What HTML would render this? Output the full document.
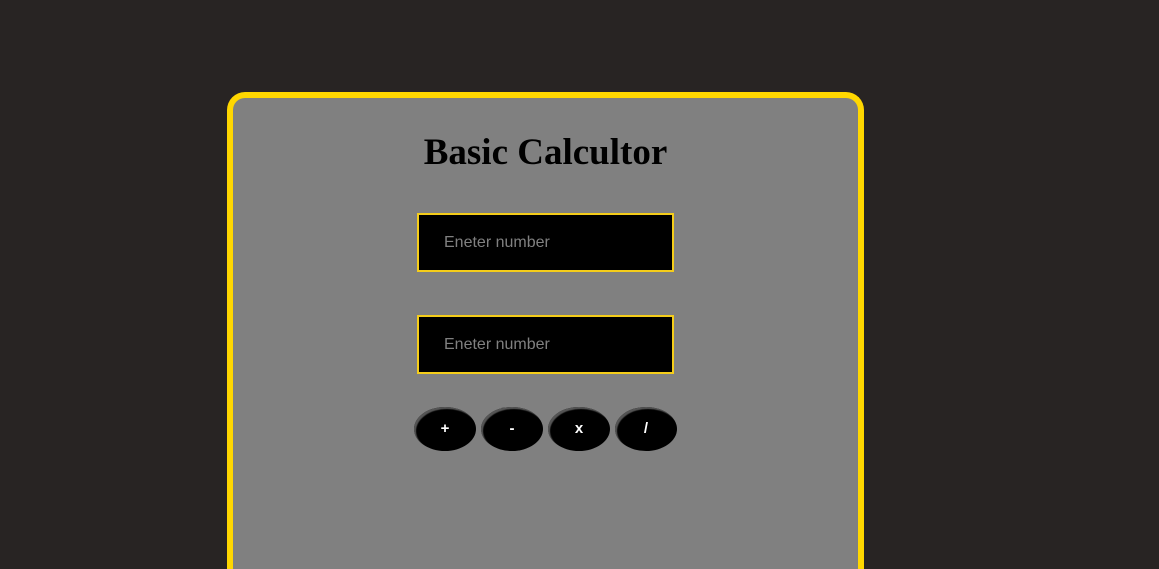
<!DOCTYPE html>
<html><head><style>
html,body{margin:0;padding:0;background:#282423;width:1159px;height:569px;overflow:hidden}
.wrap{position:relative;width:1159px;height:569px;overflow:hidden}
.card{position:absolute;left:227px;top:92px;width:625px;height:471px;border:6px solid #ffd700;border-bottom:0;border-radius:18px 18px 0 0;background:#808080}
h1{position:absolute;left:227px;width:637px;top:131px;margin:0;text-align:center;font:bold 37px "Liberation Serif",serif;color:#000}
.in{position:absolute;left:417px;width:253px;height:55px;background:#000;border:2px solid #f5cd1a;font:16px "Liberation Sans",sans-serif;color:#808080;line-height:55px;text-indent:25px}
.b{position:absolute;top:407px;width:62px;height:44px;border-radius:50%;background:#000;box-shadow:inset 2px 2px 1px #555;color:#fff;font:bold 15px "Liberation Sans",sans-serif;text-align:center;line-height:43px}
</style></head><body><div class="wrap">
<div class="card"></div>
<h1>Basic Calcultor</h1>
<div class="in" style="top:213px">Eneter number</div>
<div class="in" style="top:315px">Eneter number</div>
<div class="b" style="left:414px">+</div>
<div class="b" style="left:481px">-</div>
<div class="b" style="left:548px">x</div>
<div class="b" style="left:615px">/</div>
</div></body></html>
